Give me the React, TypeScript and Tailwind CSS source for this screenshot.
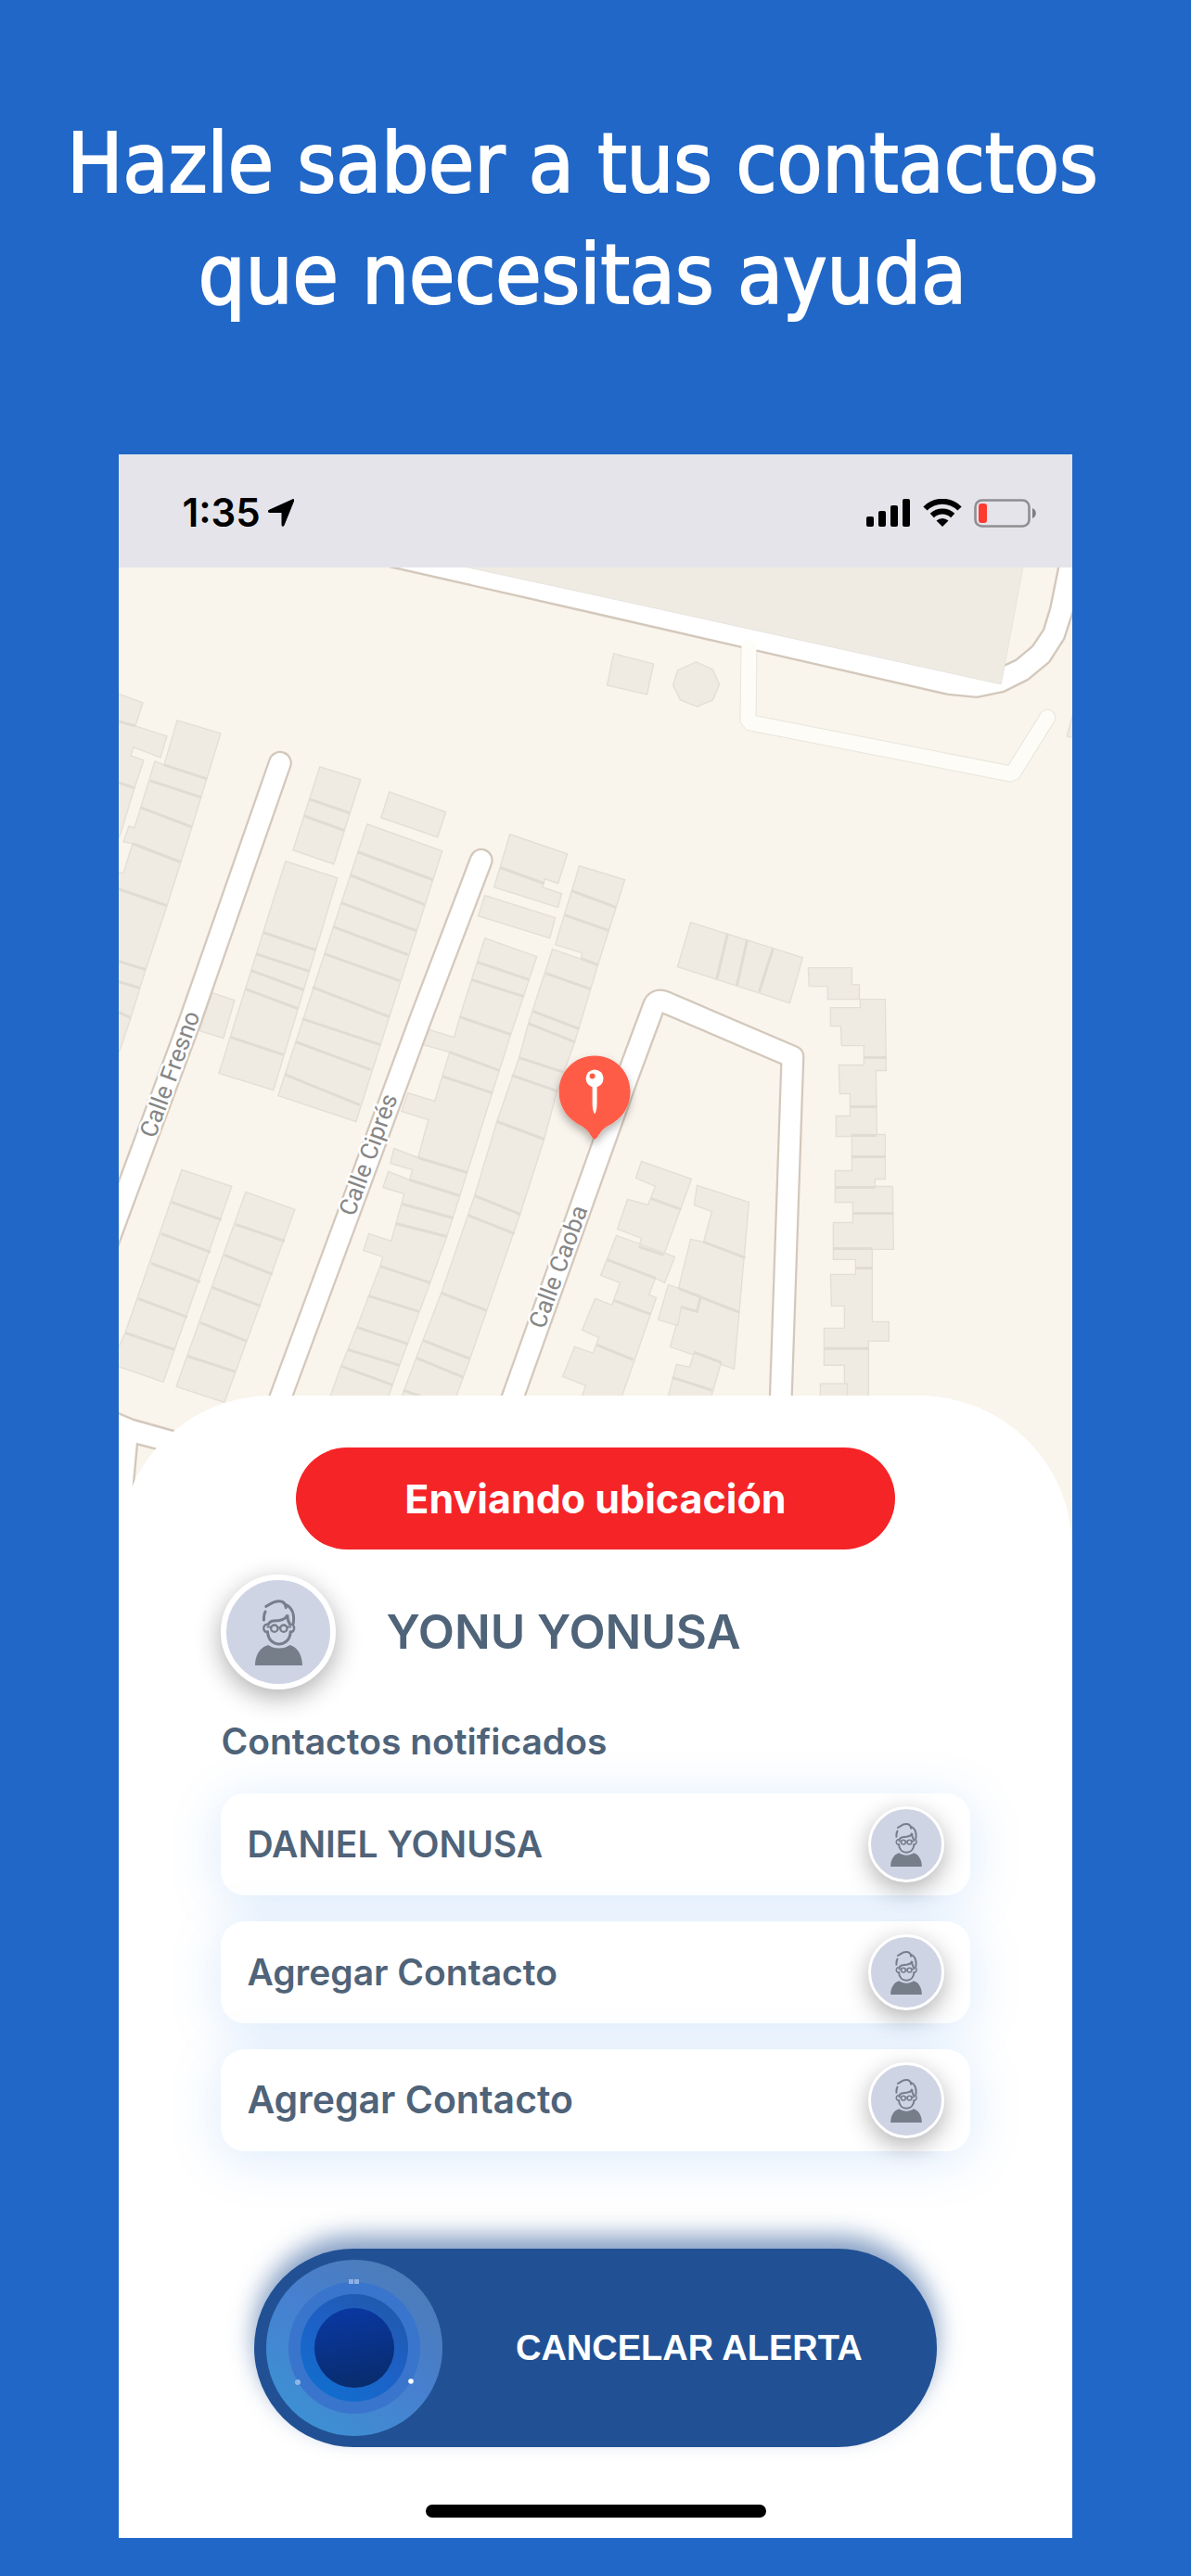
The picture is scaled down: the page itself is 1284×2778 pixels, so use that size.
import React from 'react';

const contacts = [
  { id: 1, name: 'DANIEL YONUSA', size: 'text-[39px]' },
  { id: 2, name: 'Agregar Contacto', size: 'text-[39px]' },
  { id: 3, name: 'Agregar Contacto', size: 'text-[41px]' },
];

// Building footprints, one outline per block
const buildings = [
  'M-4 135L26 146L18 171L52 182L45 205L16 194L13 203L27 208L17 238L2 287L-4 300Z',
  'M63 165L110 179L95 228L79 280L67 318L52 365L29 434L13 486L2 519L-4 530V328L5 330L15 298L5 296L11 279L17 281L39 209L49 213Z',
  'M217 215L261 229L232 320L188 305Z',
  'M180 317L236 335L167 564L108 546Z',
  'M101 459L125 467L113 508L87 500Z',
  'M292 242L353 264L344 291L283 270Z',
  'M268 277L349 306L256 598L172 570Z',
  'M422 288L484 309L474 341L460 336L457 345L478 352L474 367L405 345Z',
  'M395 354L471 378L465 400L388 376Z',
  'M497 322L546 337L517 429L499 422L500 416L471 407Z',
  'M468 412L517 429L492 512L473 565L459 617L433 698L397 802L379 854L355 920H296L321 853L348 783L384 678L408 598L432 529L442 492Z',
  'M395 400L451 420L423 504L403 567L376 653L354 722L336 772L303 861L282 920H219L240 862L257 820L282 754L285 744L264 737L270 719L294 727L308 676L285 669L291 652L314 661L317 650L293 643L297 627L323 637L334 596L305 587L312 567L341 576L357 523L328 515L335 499L362 507L368 485Z',
  'M68 650L122 668L48 879L-4 861V850L7 826Z',
  'M137 674L190 693L114 901L62 884Z',
  'M534 93L577 104L570 137L527 127Z',
  'M623 102L641 110L648 126L641 143L624 150L606 143L598 127L603 111Z',
  'M1032 150L1023 182L1032 184Z',
  'M617 383L738 421L724 470L603 431Z',
  'M744 432H791V450H799V466H765V452H745Z',
  'M800 466H827L828 543H817L818 614H774V592H789V568H778L777 537H804V516H780L779 495H768V475H800Z',
  'M791 612H827V660H816V668H835L836 736H813V814H831V835H809V920H783V861H761V821H783V797H769L768 763H795V747H771V707H792V685H773V651H791Z',
  'M757 881H786V920H757Z',
  'M564 641L618 660L588 742L561 733L564 724L538 714L549 682L571 688L579 668L558 659Z',
  'M537 721L600 744L589 772L579 767L572 785L580 788L534 920H490L504 883L479 873L492 841L512 848L518 831L500 823L514 789L532 796L541 772L520 764Z',
  'M624 667L680 685L664 865L595 841L607 798L624 803L628 786L604 778L617 725L631 728L640 695L621 688Z',
  'M593 774L628 786L624 803L607 798L603 818L582 812Z',
  'M621 847L650 858L632 920H586L602 860L616 863Z',
];

// Party walls between neighbouring houses
const walls = [
  'M0 166L18 171M0 232L17 238',
  'M49 213L95 228M34 230L89 248M24 259L79 280M15 298L67 318M0 347L52 365M0 425L29 434M0 447L23 454M0 480L13 486',
  'M206 250L249 265M200 268L244 284',
  'M156 394L213 413M148 417L206 436M143 435L200 456M137 455L193 476M121 507L178 526',
  'M258 307L339 337M250 332L330 364M240 362L321 392M232 388L312 418M222 417L303 446M209 453L292 485M198 487L282 515M191 512L272 542M179 547L260 580',
  'M412 324L459 341M489 349L537 367M481 375L529 392M499 422L517 429',
  'M461 438L509 455M447 479L497 498M442 492L492 512M432 529L484 546M424 548L473 565M408 598L459 617M384 678L433 698M377 699L427 719M348 783L397 802M328 834L379 854M321 853L372 874M307 888L330 896',
  'M387 426L443 445M381 445L437 463M368 485L423 504M357 523L411 543M349 549L403 567M323 637L376 653M314 661L368 678M306 687L361 702M299 708L354 722M282 754L336 772M269 786L324 803M257 820L312 838M247 844L303 861M240 862L295 882',
  'M57 685L111 704M46 719L99 739M35 751L88 771M21 789L74 809M7 826L60 844',
  'M126 709L179 727M114 742L166 763M101 777L153 797M88 815L138 835M74 851L126 868',
  'M657 395L645 445M678 402L667 451M706 411L691 458',
  'M804 529H828M789 582H818M791 613H818M791 636H827M773 669H816M792 697H836M771 735H813M795 756H813M761 843H809',
  'M574 681L607 693M561 733L588 742M527 747L579 767M534 791L574 806M516 839L555 855',
  'M631 728L676 745M604 778L670 804M607 798L624 803L628 786M597 874L640 888M621 847L650 858',
];

const streets = [
  'M174 211L77 489L-20 750',
  'M391 316L325 489L250 692L160 935',
  'M411 935L426 893L548 552L577 474Q580 465 589 469L727 528L713 935',
];

const labels = [
  { text: 'Calle Fresno', x: 56, y: 547 },
  { text: 'Calle Ciprés', x: 270, y: 634 },
  { text: 'Calle Caoba', x: 475, y: 755 },
];

function StreetMap() {
  return (
    <svg viewBox="0 0 1028 1060" className="block w-full bg-[#f9f4ec]" role="img" aria-label="Mapa">
      <defs>
        <filter id="pin-shadow" x="-50%" y="-50%" width="200%" height="200%">
          <feDropShadow dx="0" dy="5" stdDeviation="5" floodColor="#000" floodOpacity="0.3" />
        </filter>
      </defs>

      <g fill="#efebe3" stroke="#e3dfd7" strokeWidth="1.4">
        {buildings.map((d) => <path key={d} d={d} />)}
      </g>
      <g fill="none" stroke="#e0dcd3" strokeWidth="3">
        {walls.map((d) => <path key={d} d={d} />)}
      </g>

      {/* service lane */}
      <g fill="none" strokeLinecap="round" strokeLinejoin="bevel">
        <path d="M680 86L679 167L964 223L1002 162" stroke="#e8e6dc" strokeWidth="18" />
        <path
          d="M292 -1L520 51L672 86L895 137L926 140L955 134L981 121L1004 102L1020 77L1034 34V-10H1016L1005 44L998 67L986 85L968 100L955 106L340 -10Z"
          fill="#fff"
          stroke="#d3c8bb"
          strokeWidth="2.4"
        />
        <path d="M680 86L679 167L964 223L1002 162" stroke="#fdfcf6" strokeWidth="16" />
      </g>
      <path d="M368 -2L520 31L952 126L976 -2Z" fill="#efebe3" stroke="#e6e4df" />

      <g fill="none" strokeLinecap="round" strokeLinejoin="round">
        {streets.map((d) => <path key={d} d={d} stroke="#d3c8bb" strokeWidth="26" />)}
        {streets.map((d) => <path key={d} d={d} stroke="#fff" strokeWidth="21.5" />)}
      </g>
      <path
        d="M-5 911L17 920L60 932L130 952V975L20 946L14 1010V1100H-5Z"
        fill="#fff"
        stroke="#d3c8bb"
        strokeWidth="2.4"
      />

      <g
        className="font-['Roboto',sans-serif] text-[26px]"
        fill="#868686"
        stroke="#fff"
        strokeWidth="5"
        strokeLinejoin="round"
        paintOrder="stroke"
        textAnchor="middle"
      >
        {labels.map((l) => (
          <text key={l.text} transform={`translate(${l.x} ${l.y}) rotate(-70)`} y="8">{l.text}</text>
        ))}
      </g>

      <path
        d="M513.500 617C511 617 509 611 505 607C501 603 497 602 493 599C482 592 475 580 475 566C475 544 492 527 513.500 527C535 527 552 544 552 566C552 580 545 592 534 599C530 602 526 603 522 607C518 611 516 617 513.500 617Z"
        fill="#ff5c46"
        filter="url(#pin-shadow)"
      />
      <circle cx="513.500" cy="551.500" r="9.500" fill="#fff" />
      <path d="M511 559H516V578C516 584 515 588 513.500 590C512 588 511 584 511 578Z" fill="#fff" />
      <circle cx="511" cy="549" r="3" fill="#ff5c46" />
    </svg>
  );
}

function PersonIcon({ className }: { className: string }) {
  return (
    <svg viewBox="0 0 152 212" className={className} fill="none" stroke="#767e8a" strokeWidth="9" strokeLinecap="round" aria-hidden="true">
      <path d="M0 212C0 180 16 152 42 146C62 160 92 160 112 146C136 152 152 180 152 212Z" fill="#767e8a" stroke="none" />
      <path d="M40 104C42 130 58 143 77 143C96 143 112 130 114 104" />
      <path d="M42 80C30 78 26 88 28 96C30 104 36 105 41 104M112 80C124 78 127 88 125 96C123 104 118 105 113 104" strokeWidth="7" />
      <path d="M42 80C52 64 64 69 78 67C92 65 101 59 104 49C103 62 106 70 112 80" />
      <circle cx="62" cy="93" r="11" strokeWidth="7" />
      <circle cx="92" cy="93" r="11" strokeWidth="7" />
      <path d="M40 88H51M103 88H114M73 90H81" strokeWidth="6" />
      <path d="M35 22C48 17 56 5 76 5C90 5 98 12 99 26M98 16C120 26 127 50 123 76" />
      <path d="M33 39C28 47 28 54 28 66" />
    </svg>
  );
}

function StatusBar() {
  return (
    <div className="flex h-[122px] items-center justify-between bg-[#e5e4ea] pl-[68px] pr-[38px] pt-1">
      <div className="flex items-center gap-2">
        <span className="text-[42px] font-semibold leading-[48px] text-black">1:35</span>
        <svg viewBox="0 0 28 30" className="h-[30px] w-7" aria-hidden="true">
          <path d="M27 0.500C28 0.500 28 1 27.700 2L17 28.500C16.300 30 15 29.600 15 28V14.500H1.500C0 14.500 -0.500 13 1 12.300Z" stroke="#000" />
        </svg>
      </div>
      <div className="flex items-center gap-[13px]">
        <svg viewBox="0 0 48 30" className="h-[30px] w-12" aria-hidden="true">
          <rect x="0" y="19" width="8" height="11" rx="2" />
          <rect x="13" y="13" width="8" height="17" rx="2" />
          <rect x="26" y="7" width="8" height="23" rx="2" />
          <rect x="39" y="0" width="8" height="30" rx="2" />
        </svg>
        <svg viewBox="0 0 42 30" className="h-[30px] w-[42px]" fill="none" stroke="#000" strokeWidth="6" aria-hidden="true">
          <path d="M2.500 10.500A26 26 0 0 1 39.500 10.500" />
          <path d="M9.800 18A16 16 0 0 1 32.200 18" />
          <path d="M21 30L14.500 23.500A9.500 9.500 0 0 1 27.500 23.500Z" fill="#000" stroke="none" />
        </svg>
        <svg viewBox="0 0 68 31" className="h-[31px] w-[68px]" aria-hidden="true">
          <rect x="1.500" y="1.500" width="58" height="28" rx="7" fill="none" stroke="#8e8e93" strokeWidth="2.600" />
          <rect x="5" y="5" width="9" height="21" rx="3" fill="#ff3b30" />
          <path d="M63 10C68 12 68 19 63 21Z" fill="#7d7d82" />
        </svg>
      </div>
    </div>
  );
}

function Dial() {
  return (
    <svg viewBox="0 0 190 192" className="h-[192px] w-[190px] shrink-0" aria-hidden="true">
      <defs>
        <linearGradient id="dial-outer" x1="0.150" y1="0.900" x2="0.750" y2="0.100">
          <stop offset="0" stopColor="#3d90d3" />
          <stop offset="0.550" stopColor="#4780d0" />
          <stop offset="1" stopColor="#4c7cbb" />
        </linearGradient>
        <linearGradient id="dial-inner" x1="0.200" y1="0.900" x2="0.700" y2="0.100">
          <stop offset="0" stopColor="#126dcd" />
          <stop offset="0.550" stopColor="#1d60c6" />
          <stop offset="1" stopColor="#205bb2" />
        </linearGradient>
        <linearGradient id="dial-core" x1="0.400" y1="0" x2="0.600" y2="1">
          <stop offset="0" stopColor="#0a38a2" />
          <stop offset="1" stopColor="#082c6c" />
        </linearGradient>
      </defs>
      <circle cx="95" cy="96" r="95" fill="url(#dial-outer)" />
      <circle cx="95" cy="96" r="71" fill="#3975cc" />
      <circle cx="95" cy="96" r="58" fill="url(#dial-inner)" />
      <circle cx="95" cy="96" r="43" fill="url(#dial-core)" />
      <path d="M89 22H94V27H89ZM95 22H100V27H95Z" fill="#8fb0e3" />
      <circle cx="34" cy="133" r="3" fill="#8fb8e6" />
      <circle cx="156" cy="132" r="2.800" fill="#fff" />
    </svg>
  );
}

export default function App() {
  return (
    <main className="min-h-screen bg-[#2167c7] pb-[42px] font-['Inter',sans-serif]">
      <h1 className="pb-[134px] pl-4 pr-[44px] pt-[116px] text-center font-['DejaVu_Sans_Condensed','Noto_Sans',sans-serif] text-[89px] leading-[120px] text-white [-webkit-text-stroke:2px_white]">
        Hazle saber a tus contactos
        <br />
        que necesitas ayuda
      </h1>

      <section className="mx-auto w-4/5 overflow-hidden bg-white pb-[22px]">
        <StatusBar />
        <StreetMap />

        <div className="relative -mt-[166px] rounded-t-[165px] bg-white px-[110px] pt-[56px]">
          <button className="mx-auto block h-[110px] w-4/5 rounded-full bg-[#f52427] text-[43px] font-bold text-white">
            Enviando ubicación
          </button>

          <div className="mt-[27px] flex items-center gap-[54px]">
            <div className="flex size-[124px] shrink-0 items-center justify-center rounded-full border-6 border-white bg-[#cfd4e5] shadow-[0_8px_28px_rgba(0,0,0,0.32)]">
              <PersonIcon className="h-[71px] w-[51px]" />
            </div>
            <h2 className="text-[51px] font-semibold leading-[60px] text-[#4f6379]">YONU YONUSA</h2>
          </div>

          <h3 className="mt-[31px] text-[39px] font-semibold leading-[50px] text-[#4f6379]">Contactos notificados</h3>

          <ul className="mt-[31px] flex flex-col gap-7">
            {contacts.map((contact) => (
              <li key={contact.id}>
                <button className="flex h-[110px] w-full items-center justify-between rounded-[26px] bg-white px-7 text-left font-semibold text-[#4f6379] shadow-[0_8px_56px_rgba(40,130,240,0.17)]">
                  <span className={contact.size}>{contact.name}</span>
                  <span className="flex size-[82px] items-center justify-center rounded-full border-3 border-white bg-[#cfd4e5] shadow-[0_8px_26px_rgba(0,0,0,0.3)]">
                    <PersonIcon className="h-[47px] w-[34px]" />
                  </span>
                </button>
              </li>
            ))}
          </ul>

          <div className="px-9 pt-[105px]">
            <button className="flex h-[214px] w-full items-center rounded-full bg-[#215194] pl-[13px] pr-20 shadow-[0_-14px_26px_rgba(33,81,148,0.55)]">
              <Dial />
              <span className="ml-auto font-['Liberation_Sans',sans-serif] text-[38px] font-bold text-white">
                CANCELAR ALERTA
              </span>
            </button>
          </div>

          <div className="mx-auto mt-[62px] h-[14px] w-[367px] rounded-full bg-black" />
        </div>
      </section>
    </main>
  );
}
